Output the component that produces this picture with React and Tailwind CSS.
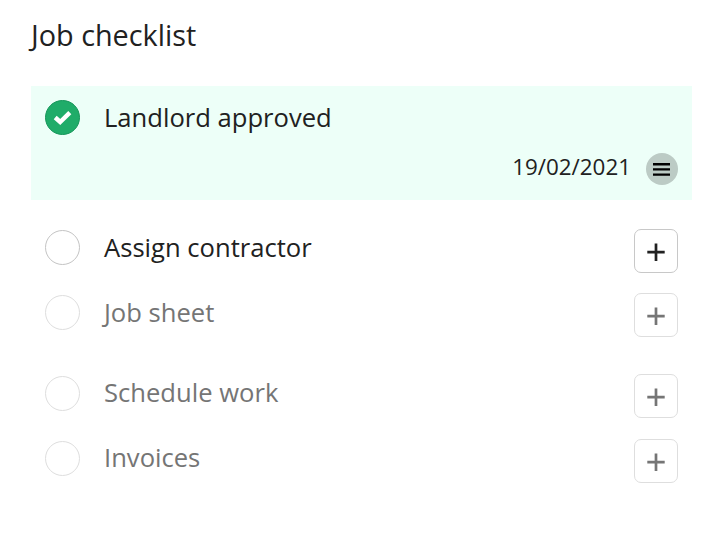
const steps = [
  { label: 'Assign contractor', active: true, row: 'h-[65px]', text: 'mt-px', button: 'mt-0' },
  { label: 'Job sheet', active: false, row: 'h-[81px]', text: 'mt-px', button: '-mt-px' },
  { label: 'Schedule work', active: false, row: 'h-[65px]', text: 'mt-0', button: '-mt-px' },
  { label: 'Invoices', active: false, row: 'h-[65px]', text: 'mt-0', button: '-mt-px' },
];

function CheckedIcon() {
  return (
    <div className="flex h-[35px] w-[35px] shrink-0 items-center justify-center rounded-full border border-[#16965a] bg-[#1fac69]">
      <svg width="19" height="15" viewBox="0 0 19 15" fill="none">
        <path d="M2.2 7.5 L7.2 12 L16.8 2.7" stroke="white" strokeWidth="4.4" />
      </svg>
    </div>
  );
}

function MenuButton() {
  return (
    <button className="flex h-8 w-8 items-center justify-center rounded-full bg-[#bccbc5]">
      <svg width="18" height="14" viewBox="0 0 18 14">
        <path d="M0 2.2h17M0 7.4h17M0 12.6h17" stroke="#000" strokeWidth="2.4" />
      </svg>
    </button>
  );
}

function ChecklistRow({ step }) {
  return (
    <li className={`flex items-start pl-3.5 pr-3.5 ${step.row} ${step.active ? 'text-[#212121]' : 'text-[#757575]'}`}>
      <span className={`mt-px h-[35px] w-[35px] shrink-0 rounded-full border ${step.active ? 'border-[#c4c4c4]' : 'border-[#dedede]'}`} />
      <span className={`ml-6 flex-1 text-[25.6px] leading-9 ${step.text}`}>{step.label}</span>
      <button className={`flex h-11 w-11 items-center justify-center rounded-[7px] border pt-0.5 ${step.button} ${step.active ? 'border-[#c8c8c8]' : 'border-[#dedede]'}`}>
        <svg width="18" height="18" viewBox="0 0 18 18">
          <path d="M9 0.5v17.4M0.3 9.2h17.4" stroke="currentColor" strokeWidth="2.7" />
        </svg>
      </button>
    </li>
  );
}

export default function App() {
  return (
    <div className="h-[554px] w-[724px] bg-white pl-[31px] pr-8 pt-[15px] font-['Open_Sans',sans-serif] text-[#212121]">
      <h1 className="h-[71px] text-[28.8px] leading-10">Job checklist</h1>

      <div className="h-[114px] bg-[#edfff8] px-3.5 pt-3.5">
        <div className="flex items-start">
          <CheckedIcon />
          <span className="ml-6 text-[25.6px] leading-9">Landlord approved</span>
        </div>
        <div className="mt-[17px] flex items-start justify-end gap-[15px]">
          <span className="-mt-0.5 text-[22.4px] leading-8">19/02/2021</span>
          <MenuButton />
        </div>
      </div>

      <ul className="pt-[29px]">
        {steps.map((step) => (
          <ChecklistRow key={step.label} step={step} />
        ))}
      </ul>
    </div>
  );
}
